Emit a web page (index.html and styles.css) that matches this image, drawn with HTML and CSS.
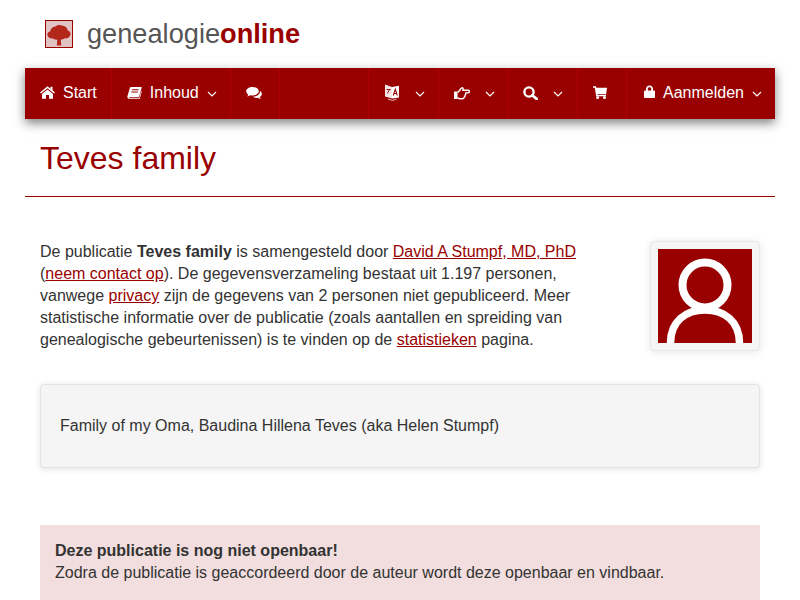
FILE: index.html
```html
<!DOCTYPE html>
<html lang="nl">
<head>
    <meta charset="UTF-8">
    <meta name="viewport" content="width=device-width, initial-scale=1.0">
    <title>Teves family</title>
    <link rel="stylesheet" href="styles.css">
</head>
<body>
    <div class="page">
        <header class="brand">
            <svg class="brand-logo" viewBox="0 0 28 28">
                <rect x="0.5" y="0.5" width="27" height="27" fill="#e2c3c3" stroke="#990000"/>
                <path d="M2.500 15.500C2 13.500 3 12 5 11.500 5.500 8.500 8 6.500 10.500 6.500 11.500 4.800 15.500 4.300 17.500 5.800 20.500 5.800 22.500 8 22.800 10.500 25 11 26 13 25.300 15 24.500 17.500 22.500 18.500 20 18.300 18.800 19.300 17 19.500 15.800 19.500L16.300 25.500H11.800L12.300 19.800C10.800 19.800 9 19.300 8 18.500 5.500 18.800 3.300 17.800 2.500 15.500Z" fill="#b3261a"/>
            </svg>
            <span class="brand-name">genealogie<strong>online</strong></span>
        </header>

        <nav class="navbar">
            <a class="nav-item nav-start">
                <svg class="icon icon-home" viewBox="0 0 15 13"><path d="M7.500 0.300 L0 6.400 L1 7.500 L7.500 2.200 L14 7.500 L15 6.400 L12.500 4.300 V0.800 H10.500 V2.700 Z M7.500 3.400 L2 7.900 V12.700 H6 V9 H9 V12.700 H13 V7.900 Z" fill="#fff"/></svg>
                Start
            </a>
            <a class="nav-item nav-book">
                <svg class="icon icon-book" viewBox="0 0 16 14"><path d="M4.500 0.500 H15 C15.600 0.500 15.800 1 15.600 1.600 L13 10.500 C12.800 11.200 12.200 11.500 11.600 11.500 H2.800 C2 11.500 1.800 12.600 2.900 12.600 H13 L15.300 4.800 L15.900 5.200 L13.500 13.500 H3 C1 13.500 0 12 0.500 10.300 L3 2 C3.300 1 3.800 0.500 4.500 0.500 Z M5.500 3 L5.200 4 H12.200 L12.500 3 Z M4.700 5.500 L4.400 6.500 H11.400 L11.700 5.500 Z" fill="#fff" fill-rule="evenodd"/></svg>
                Inhoud
                <svg class="caret" viewBox="0 0 10 6"><path d="M1 1 L5 5 L9 1" /></svg>
            </a>
            <a class="nav-item nav-chat">
                <svg class="icon icon-chat" viewBox="0 0 16 13"><path d="M6.500 0.500 C3 0.500 0.200 2.400 0.200 4.800 C0.200 6.100 1 7.300 2.300 8.100 C2.100 8.800 1.700 9.400 1.200 9.900 C2.300 9.700 3.300 9.300 4.100 8.700 C4.900 8.900 5.700 9 6.500 9 C10 9 12.800 7.100 12.800 4.800 C12.800 2.400 10 0.500 6.500 0.500 Z M14 4.500 C14.100 7.600 11 10.100 6.900 10.200 C7.900 11 9.200 11.400 10.500 11.400 C11 11.400 11.600 11.300 12 11.200 C12.700 11.800 13.700 12.200 14.800 12.400 C14.300 11.900 13.900 11.300 13.700 10.600 C15 9.900 15.800 8.800 15.800 7.500 C15.800 6.300 15.100 5.200 14 4.500 Z" fill="#fff"/></svg>
            </a>
            <span class="nav-spacer"></span>
            <a class="nav-item nav-lang">
                <svg class="icon icon-lang" viewBox="0 0 14 17">
                    <path d="M0 0.500 L7 3 V14.500 L0 12.500 Z" fill="#f6e6e6"/>
                    <path d="M7 3 L14 1.800 V13.500 L7 14.500 Z" fill="#fff"/>
                    <path d="M8.300 11.500 L10.300 5.200 L12.300 11.500 M9 9.500 H11.600" fill="none" stroke="#990000" stroke-width="1.100"/>
                    <path d="M1.500 5.500 H5.500 M2.300 9.500 L4.700 5.500" fill="none" stroke="#990000" stroke-width="0.900"/>
                    <path d="M3 15 L7.500 16.500 L11.500 15" fill="none" stroke="#f6e6e6" stroke-width="0.800"/>
                </svg>
                <svg class="caret" viewBox="0 0 10 6"><path d="M1 1 L5 5 L9 1" /></svg>
            </a>
            <a class="nav-item nav-hand">
                <svg class="icon icon-hand" viewBox="0 0 16 13">
                    <rect x="0" y="5" width="3.500" height="7.500" fill="#fff"/>
                    <path d="M3.500 6 C5 5.500 6 3 7.500 1.500 C8.500 0.800 9.500 1.500 9 3 L8.700 3.800 H14 C15.800 3.800 15.800 6.400 14 6.400 H11.600 C12 7.600 11.600 8.300 11 8.600 C11.200 9.600 10.800 10.300 10.200 10.600 C10.200 11.800 9.400 12.200 8.400 12.200 H6 C5 12.200 4.500 11.800 3.500 11.200" fill="none" stroke="#fff" stroke-width="1.400" stroke-linejoin="round"/>
                </svg>
                <svg class="caret" viewBox="0 0 10 6"><path d="M1 1 L5 5 L9 1" /></svg>
            </a>
            <a class="nav-item nav-search">
                <svg class="icon icon-search" viewBox="0 0 15 14"><circle cx="6" cy="6" r="4.600" fill="none" stroke="#fff" stroke-width="2.400"/><path d="M9.500 9.500 L13.600 12.800" stroke="#fff" stroke-width="2.800" stroke-linecap="round"/></svg>
                <svg class="caret" viewBox="0 0 10 6"><path d="M1 1 L5 5 L9 1" /></svg>
            </a>
            <a class="nav-item nav-cart">
                <svg class="icon icon-cart" viewBox="0 0 14 13"><path d="M0 0.300 H3 L3.300 1.800 H14 L13.200 8 H4.500 L4.700 8.800 H13 V10.200 H3.200 L1.800 1.800 H0 Z" fill="#fff"/><circle cx="4.600" cy="11.500" r="1.500" fill="#fff"/><circle cx="11.500" cy="11.500" r="1.500" fill="#fff"/></svg>
            </a>
            <a class="nav-item nav-login">
                <svg class="icon icon-lock" viewBox="0 0 11 13"><path d="M2 5.500 V3.800 C2 1.800 3.500 0.500 5.500 0.500 C7.500 0.500 9 1.800 9 3.800 V5.500 H10 C10.500 5.500 11 6 11 6.500 V12 C11 12.500 10.500 13 10 13 H1 C0.500 13 0 12.500 0 12 V6.500 C0 6 0.500 5.500 1 5.500 Z M3.800 5.500 H7.200 V3.800 C7.200 2.800 6.500 2.200 5.500 2.200 C4.500 2.200 3.800 2.800 3.800 3.800 Z" fill="#fff" fill-rule="evenodd"/></svg>
                Aanmelden
                <svg class="caret" viewBox="0 0 10 6"><path d="M1 1 L5 5 L9 1" /></svg>
            </a>
        </nav>

        <h1 class="title">Teves family</h1>

        <section class="intro">
            <p class="intro-text">De publicatie <strong>Teves family</strong> is samengesteld door <a href="#">David A Stumpf, MD, PhD</a> (<a href="#">neem contact op</a>). De gegevensverzameling bestaat uit 1.197 personen, vanwege <a href="#">privacy</a> zijn de gegevens van 2 personen niet gepubliceerd. Meer statistische informatie over de publicatie (zoals aantallen en spreiding van genealogische gebeurtenissen) is te vinden op de <a href="#">statistieken</a> pagina.</p>
            <div class="avatar">
                <svg viewBox="0 0 94 94">
                    <rect width="94" height="94" fill="#990000"/>
                    <circle cx="47" cy="36" r="22.500" fill="none" stroke="#fff" stroke-width="8"/>
                    <path d="M12.500 94 C12.500 72 28 61 47 61 C66 61 81.500 72 81.500 94" fill="none" stroke="#fff" stroke-width="7.500"/>
                </svg>
            </div>
        </section>

        <div class="well">Family of my Oma, Baudina Hillena Teves (aka Helen Stumpf)</div>

        <div class="notice">
            <strong>Deze publicatie is nog niet openbaar!</strong><br>
            Zodra de publicatie is geaccordeerd door de auteur wordt deze openbaar en vindbaar.
        </div>
    </div>
</body>
</html>
```

FILE: styles.css
```css
html, body {
    height: 100%;
    overflow: hidden;
}
body {
    font-family: "Liberation Sans", Arial, sans-serif;
    font-size: 16px;
    line-height: 22px;
    color: #333;
    margin: 0;
    background: #fff;
}
.page {
    padding: 0 25px;
}
.brand {
    display: flex;
    align-items: center;
    height: 68px;
    padding-left: 20px;
}
.brand-logo {
    width: 28px;
    height: 28px;
    margin-right: 14px;
}
.brand-name {
    font-size: 27.2px;
    color: #555;
}
.brand-name strong {
    color: #990000;
}
.navbar {
    display: flex;
    height: 51px;
    background: #990000;
    box-shadow: 0 4px 10px rgba(0, 0, 0, 0.5);
    color: #fff;
}
.nav-item {
    display: flex;
    align-items: center;
    padding: 0 13px 2px 15px;
    border-right: 1px solid #b00000;
    gap: 8px;
}
.nav-spacer {
    flex: 1;
    border-right: 1px solid #b00000;
}
.nav-item:last-child {
    border-right: none;
}
.icon {
    width: 16px;
    height: 14px;
}
.caret {
    width: 10px;
    height: 6px;
    margin-top: 2px;
    fill: none;
    stroke: #fff;
    stroke-width: 1.2;
}
.nav-start {
    padding-right: 14px;
}
.icon-home {
    width: 15px;
    height: 13px;
}
.icon-book {
    width: 15px;
}
.nav-chat {
    padding-right: 17px;
}
.nav-lang {
    padding-left: 16px;
    gap: 16px;
}
.icon-lang {
    width: 14px;
    height: 17px;
}
.nav-hand {
    gap: 15px;
}
.nav-search {
    padding-left: 14px;
    padding-right: 14px;
    gap: 15px;
}
.icon-search {
    width: 15px;
}
.nav-cart {
    padding-right: 19px;
}
.icon-cart {
    width: 14px;
    height: 13px;
}
.nav-login {
    padding-left: 17px;
    padding-right: 13px;
}
.icon-lock {
    width: 11px;
    height: 13px;
    margin-top: -2px;
}
.title {
    font-size: 32px;
    font-weight: normal;
    line-height: 38px;
    color: #990000;
    margin: 0;
    padding: 20px 15px 19px;
    border-bottom: 1px solid #990000;
}
.intro {
    display: flex;
    justify-content: space-between;
    padding: 44px 15px 0;
}
.intro-text {
    width: 550px;
    margin: 0;
}
.intro-text a {
    color: #990000;
    text-decoration: underline;
}
.avatar {
    width: 94px;
    height: 94px;
    padding: 7px;
    background: #f5f5f5;
    border: 1px solid #e8e8e8;
    border-radius: 4px;
    box-shadow: 0 1px 8px rgba(0, 0, 0, 0.1);
}
.avatar svg {
    display: block;
    width: 94px;
    height: 94px;
}
.well {
    margin: 33px 15px 0;
    padding: 30px 19px;
    background: #f5f5f5;
    border: 1px solid #e3e3e3;
    border-radius: 4px;
    box-shadow: 0 1px 6px rgba(0, 0, 0, 0.12);
}
.notice {
    margin: 57px 15px 0;
    padding: 15px 15px 16px;
    background: #f2dede;
}
```
